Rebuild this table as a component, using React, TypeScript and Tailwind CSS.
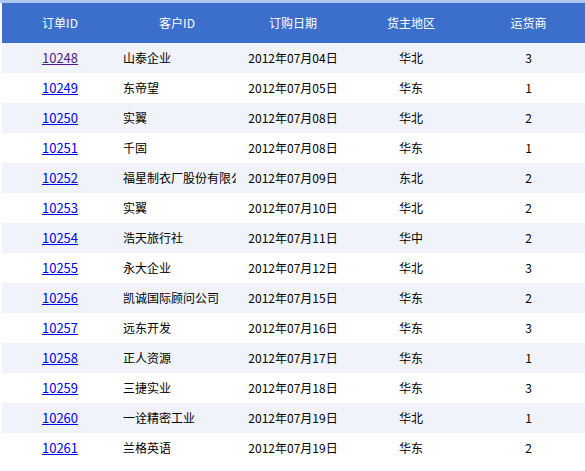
import React from "react"

type Order = {
  id: number
  customer: string
  date: string
  region: string
  shipper: number
}

const orders: Order[] = [
  { id: 10248, customer: "山泰企业", date: "2012年07月04日", region: "华北", shipper: 3 },
  { id: 10249, customer: "东帝望", date: "2012年07月05日", region: "华东", shipper: 1 },
  { id: 10250, customer: "实翼", date: "2012年07月08日", region: "华北", shipper: 2 },
  { id: 10251, customer: "千固", date: "2012年07月08日", region: "华东", shipper: 1 },
  { id: 10252, customer: "福星制衣厂股份有限公司", date: "2012年07月09日", region: "东北", shipper: 2 },
  { id: 10253, customer: "实翼", date: "2012年07月10日", region: "华北", shipper: 2 },
  { id: 10254, customer: "浩天旅行社", date: "2012年07月11日", region: "华中", shipper: 2 },
  { id: 10255, customer: "永大企业", date: "2012年07月12日", region: "华北", shipper: 3 },
  { id: 10256, customer: "凯诚国际顾问公司", date: "2012年07月15日", region: "华东", shipper: 2 },
  { id: 10257, customer: "远东开发", date: "2012年07月16日", region: "华东", shipper: 3 },
  { id: 10258, customer: "正人资源", date: "2012年07月17日", region: "华东", shipper: 1 },
  { id: 10259, customer: "三捷实业", date: "2012年07月18日", region: "华东", shipper: 3 },
  { id: 10260, customer: "一诠精密工业", date: "2012年07月19日", region: "华北", shipper: 1 },
  { id: 10261, customer: "兰格英语", date: "2012年07月19日", region: "华东", shipper: 2 },
]

const App = () => {
  return (
    <div
      className="w-[585px] min-h-[471px] bg-white text-[12px] text-black"
      style={{ fontFamily: '"Noto Sans CJK SC", "Noto Sans", sans-serif' }}
    >
      <div className="h-[3px] bg-[#aec7ef]" />
      <table className="ml-[2px] w-[583px] table-fixed border-collapse">
        <colgroup>
          <col className="w-[116px]" />
          <col className="w-[118px]" />
          <col className="w-[114px]" />
          <col className="w-[122px]" />
          <col className="w-[113px]" />
        </colgroup>
        <thead>
          <tr className="h-[40px] bg-[#3b6fcb] text-white">
            <th className="font-normal text-center">订单ID</th>
            <th className="font-normal text-center">客户ID</th>
            <th className="font-normal text-center">订购日期</th>
            <th className="font-normal text-center">货主地区</th>
            <th className="font-normal text-center">运货商</th>
          </tr>
        </thead>
        <tbody>
          {orders.map((o, i) => (
            <tr key={o.id} className={i % 2 === 0 ? "h-[30px] bg-[#f0f3f9]" : "h-[30px] bg-white"}>
              <td className="text-center">
                <a
                  href="#"
                  className={
                    i === 0
                      ? "text-[13px] text-[#551a8b] underline"
                      : "text-[13px] text-[#0000ee] underline"
                  }
                >
                  {o.id}
                </a>
              </td>
              <td className="pl-[5px] overflow-hidden whitespace-nowrap">{o.customer}</td>
              <td className="text-center whitespace-nowrap">{o.date}</td>
              <td className="text-center">{o.region}</td>
              <td className="text-center">{o.shipper}</td>
            </tr>
          ))}
        </tbody>
      </table>
    </div>
  )
}

export default App
